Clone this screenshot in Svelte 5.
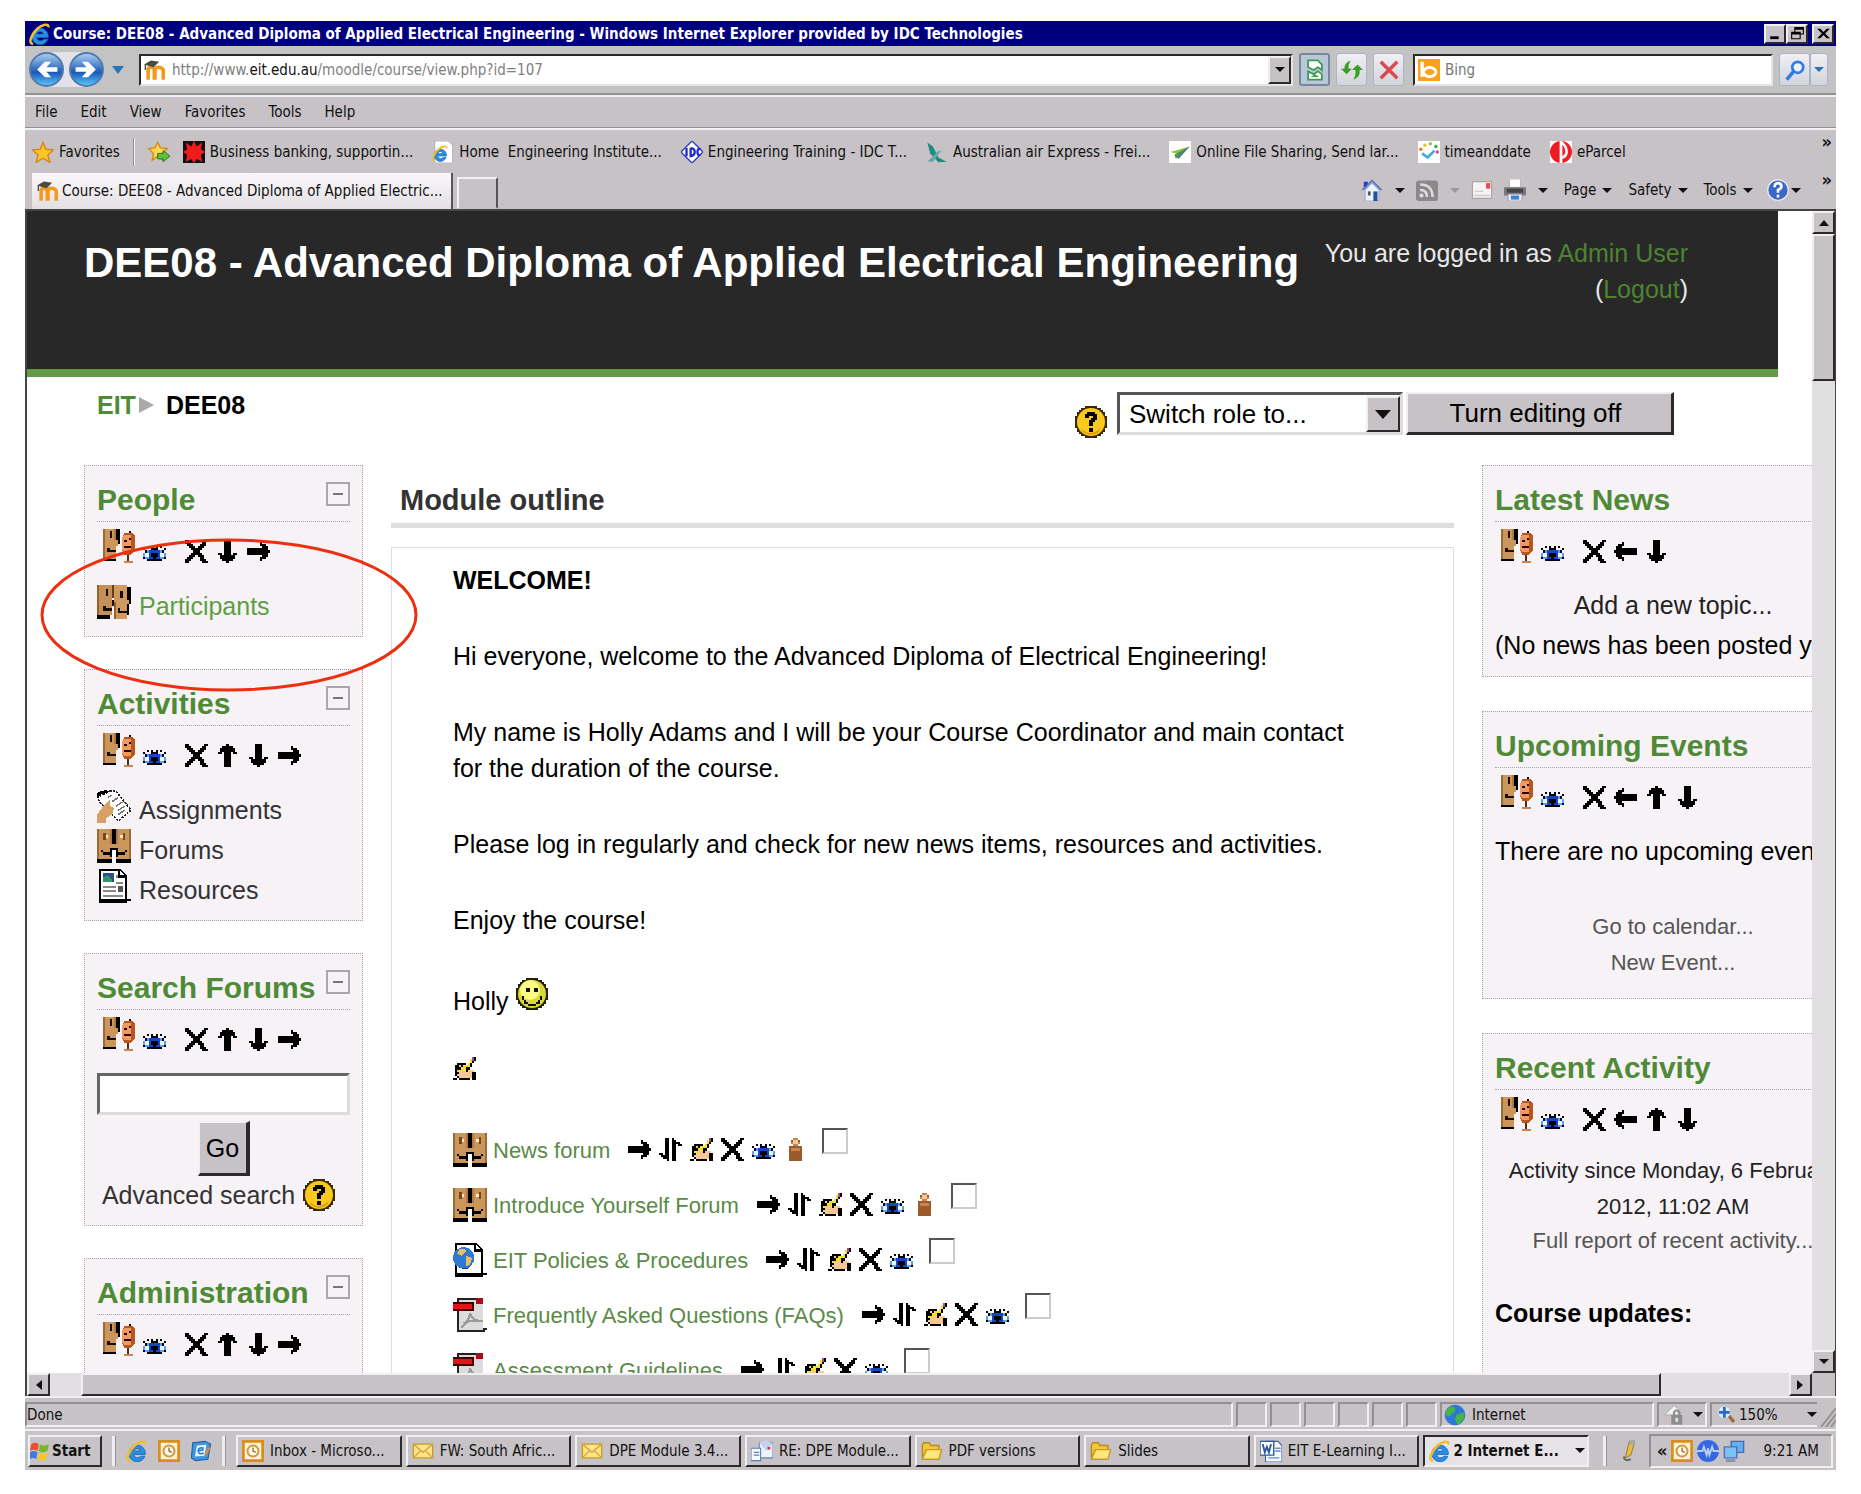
<script>
    // Small command icons, one character per pixel
    const palette = {
        "#": "#000",
        B: "#1546c8",
        L: "#59a0ee",
        w: "#eef6ff",
        f: "#f6c896",
        Y: "#f2e02c",
        P: "#a04c9c",
        o: "#c98550",
        b: "#9a5a2a",
    };

    const arrow = [
        "...........",
        "......#....",
        "......###..",
        ".......###.",
        "##########.",
        "###########",
        "##########.",
        ".......###.",
        "......###..",
        "......#....",
        "...........",
    ];

    const pixels = {
        right: arrow,
        left: arrow.map((row) => [...row].reverse().join("")),
        down: arrow.map((_, y) => arrow.map((row) => row[y]).join("")),
        up: arrow.map((_, y) => arrow.map((row) => row[10 - y]).join("")),
        remove: [
            "##.......##",
            "###.....##.",
            ".###...###.",
            "..###.###..",
            "...#####...",
            "....###....",
            "...#####...",
            "..###.###..",
            ".###...##..",
            "###....###.",
            "##......###",
        ],
        eye: [
            "...........",
            "...........",
            "...........",
            "..#.#.#.#..",
            "#...###...#",
            ".#LBBBBBL#.",
            "LwwB###BwwL",
            "LwwB###BwwL",
            "#LLBB#BBLL#",
            "..#######..",
            "...........",
        ],
        edit: [
            ".........P#",
            "........YP#",
            "........Y#.",
            "..####.Y#..",
            ".##f#YYY#..",
            ".###YY##...",
            ".#YYff#fff.",
            ".##ffffff##",
            ".#fffffff##",
            "..#ffffff##",
            "##.#####.##",
        ],
        move: [
            "...##.#....",
            "...##.##...",
            "...##.####.",
            "...##.##.##",
            "...##.##...",
            "...##.##...",
            "...##.##...",
            "##.##.##...",
            ".####.##...",
            "..###.##...",
            "....#.##...",
        ],
        group: [
            ".....oo....",
            "....bffb...",
            "....offo...",
            ".....oo....",
            "...bbbbbb..",
            "...boooob..",
            "...bbbbbb..",
            "...bbbbbb..",
            "...bbbbbb..",
            "...bbbbbb..",
            "...bbbbbb..",
        ],
    };

    const eGlyph = (x, y, s) =>
        `<g transform="translate(${x} ${y}) scale(${s})"><path d="M14 10.500H5.500a3 3 0 0 0 5.300 1.300h2.900a6 6 0 1 1 .3-1.300zM5.500 8h5a2.600 2.600 0 0 0-5 0z" fill="#2a8fe4" stroke="#1263b4" stroke-width=".6"/><path d="M3 15C-.6 15.500 1 9 6 4.200 9.500 1 14.500 0 14.200 3.200" fill="none" stroke="#f4bd2c" stroke-width="1.800"/></g>`;
    const envelope = `<path d="M1 3h14v10H1z" fill="#ffe489" stroke="#c99a24"/><path d="M1 3l7 6 7-6M1 13l5-5m9 5-5-5" fill="none" stroke="#d4a83a"/>`;
    const clock = `<path d="M1 1h14v14H1z" fill="#fff3d4" stroke="#d98d1c" stroke-width="2"/><circle cx="8" cy="8" r="4" fill="#fffaf0" stroke="#cc9a48" stroke-width="1.500"/><path d="M8 5.500V8l2 1" fill="none" stroke="#a06a20"/>`;
    const folder = `<path d="M1 13V4l1-2h4l1 2h6v3H4z" fill="#f3c83c" stroke="#b98a16"/><path d="M1 14l3-7h11l-2 7z" fill="#ffe780" stroke="#c99a20"/>`;
    const moodle = `<path d="M3 15V8q0-2 2-2t2.500 2v7M8 15V8q0-2 2.500-2T14 8v7" fill="none" stroke="#f39a1c" stroke-width="2.600"/><path d="M0 4l5-3 6 1-4 4z" fill="#4b4b40"/><path d="M1 4v4" stroke="#4b4b40"/>`;
    const helpBadge = `<path d="M5 0h6v1h2v1h1v1h1v2h1v6h-1v2h-1v1h-1v1h-2v1H5v-1H3v-1H2v-1H1v-2H0V5h1V3h1V2h1V1h2z" fill="#3a2a00"/><circle cx="8" cy="8" r="7" fill="#fbc91c"/><path d="M3 11q4 5 10 0l-1 2q-4 3-8 0z" fill="#e09c10"/><path d="M5 4h1V3h4v1h1v3h-1v1H9v2H7V7h1V6h1V5H7v1H5zM7 11h2v2H7z" fill="#000"/>`;
    const halfFace = `<path d="M0 0h7v7h1v2H7v5H0z" fill="#cb965c"/><path d="M0 0h1v14H0z" fill="#9b6a36"/><path d="M6 0h1v7H6z" fill="#b07a44"/><path d="M3 2h1v3H3z" fill="#7a4518"/><path d="M4 3h1v1H4z" fill="#ffe8c8"/><path d="M2 10h1v1h3V9h1v4H6v-1H3v-1H2z" fill="#000"/>`;
    const page = `<path d="M1 0h10l3 3v11h2v1h-2v1H1z" fill="#000"/><path d="M2 1h8v3h3v10H2z" fill="#fff"/><path d="M11 1l2 2h-2z" fill="#fff"/>`;

    const drawings = {
        ie: eGlyph(0, 0, 1),
        moodle,
        clock,
        envelope,
        folder,
        help: helpBadge,
        roles: `<path d="M7 0h2v7H7zM1 14h6v1H1z" fill="#000"/><path d="M1 0h6v5h1v3H7v6H1z" fill="#cb965c"/><path d="M1 0h1v14H1z" fill="#9b6a36"/><path d="M6 0h1v5H6z" fill="#b07a44"/><path d="M4 1h1v3H4zM3 9h1v1h3v1H3z" fill="#1a0d00"/><path d="M11 2h4l1 1v7l-2 2h-3l-1-2V4z" fill="#b8561c"/><path d="M11 3h3v8h-3l-1-1V4z" fill="#f09a62"/><path d="M13 1h1v1h-1zM11 5h1v1h-1zM13 4h1v1h-1zM11 8h3v1h-3z" fill="#200"/><path d="M12 12h1v3h-1z" fill="#432"/><path d="M11 15h4v1h-4z" fill="#c98550"/>`,
        people: `<path d="M14 1h2v8h-1v5h-1zM0 14h6v2H0z" fill="#000"/><path d="M0 0h7v14H0z" fill="#c39058"/><path d="M8 0h6v7h1v2h-1v7H8z" fill="#cf9a60"/><path d="M0 0h1v14H0zM8 8h1v8H8z" fill="#94622e"/><path d="M7 0h1v6H7z" fill="#6b4018"/><path d="M4 2h1v3H4zM11 3h1v3h-1zM3 10h1v1h3v1H3zM10 11h1v1h3v1h-4zM7 7h1v3H7z" fill="#1a0d00"/>`,
        forum: `<path d="M7 0h2v16H7zM0 14h6v2H0zM10 14h6v2h-6z" fill="#000"/>${halfFace}<g transform="translate(16 0) scale(-1 1)">${halfFace}</g><path d="M7 10h2v6H7z" fill="#fff"/><path d="M7 9h2v1H7zM6 14h1v2H6zM9 14h1v2H9z" fill="#000"/>`,
        assignment: `<path d="M6 1h3l7 9-6 5-8-8-2-3z" fill="#fff" stroke="#222" stroke-width=".8" stroke-dasharray="1 .6"/><path d="M5 4l2-1M7 6l3-2M9 8l3-2M10 10l3-2M10 12l3-2" stroke="#777" stroke-width=".7"/><path d="M0 16v-4l3-4 3-3v3l2 1-1 3-3 2v2z" fill="#d9a066"/><path d="M0 4l1-2 4-1" fill="none" stroke="#000" stroke-width="1.500"/>`,
        resource: `${page}<path d="M3 2h5v4H3z" fill="#28518c"/><path d="M3 4l2-1 2 2v1H3z" fill="#35946a"/><path d="M9 3h1v1H9zM9 6h3v1H9zM3 8h6v1H3zM3 10h6v1H3zM3 12h9v1H3z" fill="#888"/><path d="M10 8h2v3h-2z" fill="#555"/>`,
        web: `${page}<circle cx="5" cy="7" r="5" fill="#2f7ad0"/><path d="M3 3q3-1 3 1l-2 2-2-1zM6 6l3 1-1 3-2 1z" fill="#e3bd6a"/><path d="M1 10q4 4 8 0l-2 2q-3 1-6-2z" fill="#123e7c"/>`,
        pdf: `<path d="M2 0h12v14h2v1h-1v1H2z" fill="#222"/><path d="M3 1h11v14H3z" fill="#dcdcdc"/><path d="M11 0h3v3h-3z" fill="#a80c14"/><path d="M0 2h10v4H0z" fill="#400"/><path d="M0 3h9v2H0z" fill="#e3131c"/><path d="M4 14q4-4 4-7 1 4 6 4M5 12q4-2 8-1" fill="none" stroke="#999"/>`,
        smile: `<path d="M5 0h6v1h2v1h1v1h1v2h1v6h-1v2h-1v1h-1v1h-2v1H5v-1H3v-1H2v-1H1v-2H0V5h1V3h1V2h1V1h2z" fill="#222200"/><circle cx="8" cy="8" r="7" fill="#d8d83c"/><circle cx="7" cy="6" r="5" fill="#fafa86"/><path d="M5 5h2v2H5zM9 5h2v2H9zM3 9h1v2h1v1h1v1h4v-1h1v-1h1V9h1v2h-1v2h-2v1H6v-1H4v-2H3z" fill="#111"/>`,
        star: `<path d="M8 1l2 5 5.500.5-4 3.700L13 15.500l-5-3-5 3 1.500-5.300-4-3.700L6 6z" fill="#ffc42e" stroke="#d8860e"/>`,
        starAdd: `<path d="M7 1l2 4 5 .5-4 3.700L11 14l-4-3-4 3 1-4.800L.5 5.500 5 5z" fill="#ffd75a" stroke="#d8860e"/><path d="M7 9h4V7l5 4-5 4v-2H7z" fill="#5cc03a" stroke="#2c7a18" stroke-width=".7"/>`,
        bank: `<path d="M0 0h16v16H0z" fill="#111"/><path d="M8 0l2 4 4-3-1 5 3 2-3 2 1 5-4-2-2 3-2-3-4 2 1-5-3-2 3-2-1-5 4 3z" fill="#f01c1c"/>`,
        iePage: `<path d="M2 0h10l3 3v13H2z" fill="#fff" stroke="#a8b0bc" stroke-width=".7"/>${eGlyph(0, 3, 0.75)}`,
        idc: `<path d="M8 0l8 8-8 8-8-8z" fill="#fff" stroke="#3038b8"/><path d="M4 5v6M7 5v6q3-.5 3-3T7 5M14 6q-2-1-2 2t2 2" fill="none" stroke="#2028d8" stroke-width="1.700"/>`,
        air: `<path d="M1 1l4 3 4 8 6 3-6 .5L3 9z" fill="#1c8c80"/><path d="M1 15l8-8 2 0-6 8z" fill="#69a6a8"/>`,
        plane: `<path d="M0 0h16v16H0z" fill="#fff"/><path d="M1 8l14-4-6 6z" fill="#8cc43c"/><path d="M4 10l11-6-8 9z" fill="#4a7aa0"/><path d="M4 10l11-6-7 5-3 4z" fill="#5a9a30"/>`,
        timeanddate: `<path d="M0 0h16v16H0z" fill="#fff"/><circle cx="5" cy="3" r="1.200" fill="#f2c21c"/><circle cx="9" cy="2" r="1.200" fill="#8cc43c"/><circle cx="13" cy="4" r="1.300" fill="#3ab04c"/><circle cx="2" cy="6" r="1.300" fill="#f07a1c"/><circle cx="14" cy="8" r="1.200" fill="#e03a9c"/><path d="M3 9l4 3 5-5" fill="none" stroke="#48a8e0" stroke-width="2"/>`,
        parcel: `<path d="M0 0h16v16H0z" fill="#fff"/><circle cx="8" cy="8" r="8" fill="#ee1c25"/><path d="M7 0h1.500q4.500 3 4.500 8 0 4-4 5v3H7z" fill="#fff"/><path d="M9 2.500q2.500 3 2 6.500l-2 2z" fill="#ee1c25"/>`,
        bing: `<path d="M0 0h16v16H0z" fill="#f9a11b"/><path d="M3 2v11" stroke="#fff" stroke-width="2.400"/><ellipse cx="8.500" cy="9.500" rx="4.500" ry="3.300" fill="none" stroke="#fff" stroke-width="2.200"/>`,
        compat: `<path d="M3 1h7l3 3v4l-3-2-3 2-4-2zM3 15V9l4 2 3-2 3 2v4z" fill="#fff" stroke="#3c9a54" stroke-width="1.300"/><path d="M5 13l3-2 3 2z" fill="#3c9a54"/>`,
        refresh: `<path d="M0 7h2.500Q2 3 7 1 5 4 5.500 7H8l-4 4zM16 8h-2.500q1 5-4.500 7 2-3 1.500-7H8l4-4z" fill="#34a024"/>`,
        stop: `<path d="M2 2l12 12M14 2L2 14" stroke="#d84a4e" stroke-width="2.500"/>`,
        search: `<circle cx="10" cy="6" r="4" fill="#eaf4ff" stroke="#2f7ce8" stroke-width="2"/><path d="M7 9l-5 6" stroke="#2f7ce8" stroke-width="2.600"/>`,
        home: `<path d="M2 2h3v4H2z" fill="#2c3cc0"/><path d="M1 8l7-7 7 7" fill="#8ea4dc" stroke="#5a6cb8"/><path d="M3 8l5-5 5 5v8H3z" fill="#eef2fa" stroke="#98a8c8" stroke-width=".7"/><path d="M5 9h2v3H5z" fill="#555"/><path d="M9 9h3v7H9z" fill="#24529c"/>`,
        rss: `<rect x="0" y="1" width="16" height="15" rx="2" fill="#8b888c"/><path d="M3 4q9 0 9 9M3 8q5 0 5 5" fill="none" stroke="#ddd" stroke-width="1.800"/><circle cx="4" cy="12" r="1.500" fill="#ddd"/>`,
        mail: `<path d="M1 2h14v12H1z" fill="#f7f3f5" stroke="#999" stroke-width=".7"/><path d="M11 3h3v4h-3z" fill="#e04a50"/><path d="M3 9h6M2 12h12" stroke="#ccc"/>`,
        print: `<path d="M4 0h8v6H4z" fill="#fff" stroke="#aaa" stroke-width=".5"/><path d="M0 6h16v6H0z" fill="#7a7a7e"/><path d="M2 7h12v3H2z" fill="#444"/><path d="M3 11h10v5H3z" fill="#eef" stroke="#889" stroke-width=".5"/><path d="M5 12h6v3H5z" fill="#3c88d0"/>`,
        helpBlue: `<circle cx="8" cy="8" r="7.500" fill="#3b68c4" stroke="#e2e8f4"/><path d="M5.500 6q0-3 2.500-3t2.500 2.500Q10.500 7 8 8v2M8 11.500v2" fill="none" stroke="#fff" stroke-width="1.900"/>`,
        flag: `<path d="M1 3q3-2 6 0L6 8Q3 6 0 8z" fill="#e8502c"/><path d="M8 3q3 2 7 0l-1 5q-4 2-7 0z" fill="#74b82c"/><path d="M0 9q3-2 6 0l-1 5q-3-2-5 0z" fill="#3f7be0"/><path d="M7 9q3 2 7 0l-1 5q-4 2-7 0z" fill="#f6c42c"/>`,
        desktop: `<path d="M2 2l9-1 4 2-2 11-9 1-3-2z" fill="#3f95dc" stroke="#1e62a8" stroke-width=".8"/><path d="M5 4l7-.5-1.500 8-7 .5z" fill="#e8f4ff"/><path d="M10 6Q6 5 6 8t4 1.500M6 8l4-1" fill="none" stroke="#2a7cc8" stroke-width="1.200"/><path d="M13 5l2 1-3 5-2 1z" fill="#d88a4c"/>`,
        reply: `<path d="M6 2h10v11H6z" fill="#eef3fb" stroke="#6b83b4" stroke-width=".8"/><path d="M6 2l5-2 5 3-5 5z" fill="#c4d4ee"/><path d="M12 5h2v2h-2z" fill="#d8343c"/><path d="M0 6h7v9H0z" fill="#f4f8ff" stroke="#5d7fb8" stroke-width=".8"/><path d="M2 9h4M2 11h4" stroke="#5d7fb8"/>`,
        word: `<path d="M4 1h9l3 3v12H4z" fill="#f4f8ff" stroke="#3c62a8" stroke-width=".8"/><path d="M0 1h10v10H0z" fill="#fff" stroke="#2b55a8"/><path d="M2 3l1.500 6L5 5l1.500 4L8 3" fill="none" stroke="#2b55a8" stroke-width="1.400"/><path d="M11 6h4M11 8h4M6 13h8" stroke="#6c8cc4"/>`,
        globe: `<circle cx="8" cy="8" r="7.500" fill="#2c78d8"/><path d="M4 2q5-1 4 3L4 9 1 8q0-4 3-6zM9 8l5-2q2 3-1 7l-3 2-2-4z" fill="#44b444"/>`,
        lock: `<path d="M1 8l7-7 3 2v5z" fill="#f2f2f2" stroke="#bbb"/><path d="M6 8h8v7H6z" fill="#8c8c8c"/><path d="M8 8V6q2-3 4 0v2" fill="none" stroke="#8c8c8c" stroke-width="1.500"/><path d="M9 10h2v3H9z" fill="#ddd"/>`,
        zoom: `<path d="M10 9l5 6" stroke="#9a6a3c" stroke-width="3"/><circle cx="6" cy="6" r="5.500" fill="#dcecff"/><path d="M6 1v10M1 6h10" stroke="#2468d8" stroke-width="2.600"/>`,
        pen: `<path d="M9 1h4l-3 10-4 2z" fill="#e8bc3c" stroke="#8a6a2c" stroke-width=".6"/><path d="M10 0h3v4l-4-1z" fill="#aaa"/><path d="M5 12q0 4 5 2" fill="none" stroke="#666" stroke-width="1.400"/>`,
        wave: `<circle cx="8" cy="8" r="8" fill="#3767e0"/><path d="M0 8h4l1-3 2 6 1-5 1 5 2-6 1 3h4" fill="none" stroke="#b8d0ff" stroke-width="1.300"/>`,
        network: `<path d="M6 1h9v8H6z" fill="#62b2f0" stroke="#4a68b0"/><path d="M1 5h9v8H1z" fill="#7ac4f4" stroke="#5a6ab8"/><path d="M2 15h7" stroke="#8890b0" stroke-width="2"/>`,
        minimise: `<path d="M3 11h8v3H3z"/>`,
        restore: `<path d="M5 1h9v8h-3V8h2V4H6v2H5zM2 6h9v8H2zM3 9v4h7V9z" fill-rule="evenodd"/>`,
        close: `<path d="M2 3h3l3 3.500L11 3h3L9.500 8l4.500 5h-3L8 9.500 5 13H2l4.500-5z"/>`,
    };

    const menus = ["File", "Edit", "View", "Favorites", "Tools", "Help"];

    const favorites = [
        { icon: "bank", text: "Business banking, supportin..." },
        { icon: "iePage", text: "Home  Engineering Institute..." },
        { icon: "idc", text: "Engineering Training - IDC T..." },
        { icon: "air", text: "Australian air Express - Frei..." },
        { icon: "plane", text: "Online File Sharing, Send lar..." },
        { icon: "timeanddate", text: "timeanddate" },
        { icon: "parcel", text: "eParcel" },
    ];

    const activities = [
        { icon: "assignment", text: "Assignments" },
        { icon: "forum", text: "Forums" },
        { icon: "resource", text: "Resources" },
    ];

    const modules = [
        { icon: "forum", text: "News forum", group: true },
        { icon: "forum", text: "Introduce Yourself Forum", group: true },
        { icon: "web", text: "EIT Policies & Procedures" },
        { icon: "pdf", text: "Frequently Asked Questions (FAQs)" },
        { icon: "pdf", text: "Assessment Guidelines" },
    ];

    const tasks = [
        { icon: "clock", text: "Inbox - Microso..." },
        { icon: "envelope", text: "FW: South Afric..." },
        { icon: "envelope", text: "DPE Module 3.4..." },
        { icon: "reply", text: "RE: DPE Module..." },
        { icon: "folder", text: "PDF versions" },
        { icon: "folder", text: "Slides" },
        { icon: "word", text: "EIT E-Learning I..." },
    ];
</script>

{#snippet pixel(name)}
    <svg class="pixel" viewBox="0 0 11 11" preserveAspectRatio="none" aria-hidden="true">
        {#each pixels[name] as row, y}
            {#each [...row] as dot, x}
                {#if dot !== "."}
                    <rect {x} {y} width="1" height="1" fill={palette[dot]} />
                {/if}
            {/each}
        {/each}
    </svg>
{/snippet}

{#snippet icon(name, size = "small")}
    <svg class="icon {size}" viewBox="0 0 16 16" preserveAspectRatio="none" aria-hidden="true">
        {@html drawings[name]}
    </svg>
{/snippet}

{#snippet command(name)}
    <a class="command" href="#{name}" aria-label={name}>{@render pixel(name)}</a>
{/snippet}

{#snippet blockHead(title, arrows, collapsible)}
    <div class="block-head">
        <h2>{title}</h2>
        {#if collapsible}
            <button class="collapse" aria-label="Hide {title}"></button>
        {/if}
    </div>
    <div class="commands">
        <a class="command" href="#roles" aria-label="Assign roles">{@render icon("roles", "large")}</a>
        {@render command("eye")}
        <span class="spacer"></span>
        {#each ["remove", ...arrows] as name}
            {@render command(name)}
        {/each}
    </div>
{/snippet}

<div class="window">
    <header class="title-bar">
        {@render icon("ie")}
        <span class="title">Course: DEE08 - Advanced Diploma of Applied Electrical Engineering - Windows Internet Explorer provided by IDC Technologies</span>
        <button class="bevel" aria-label="Minimise">{@render icon("minimise", "tiny")}</button>
        <button class="bevel" aria-label="Restore">{@render icon("restore", "tiny")}</button>
        <button class="bevel close" aria-label="Close">{@render icon("close", "tiny")}</button>
    </header>

    <div class="address-bar">
        <div class="travel">
            <button aria-label="Back">
                <svg viewBox="0 0 20 20"><path d="M17 8.500v3h-7l3 3.500H9l-5-5 5-5h4l-3 3.500z" /></svg>
            </button>
            <button aria-label="Forward">
                <svg viewBox="0 0 20 20"><path d="M3 8.500v3h7L7 15h4l5-5-5-5H7l3 3.500z" /></svg>
            </button>
        </div>
        <button class="flat" aria-label="Recent pages"><i class="tri blue wide"></i></button>
        <div class="field address">
            {@render icon("moodle")}
            <div class="url" role="textbox" tabindex="0" aria-label="Address" contenteditable="true">http://www.<b>eit.edu.au</b>/moodle/course/view.php?id=107</div>
            <button class="bevel drop" aria-label="Show addresses"><i class="tri"></i></button>
        </div>
        <button class="tool pressed" aria-label="Compatibility view">{@render icon("compat")}</button>
        <button class="tool" aria-label="Refresh">{@render icon("refresh")}</button>
        <button class="tool" aria-label="Stop">{@render icon("stop")}</button>
        <div class="field search">
            {@render icon("bing")}
            <input type="text" placeholder="Bing" aria-label="Search" />
        </div>
        <div class="search-buttons">
            <button class="tool" aria-label="Go">{@render icon("search")}</button>
            <button class="tool narrow" aria-label="Search options"><i class="tri blue"></i></button>
        </div>
    </div>

    <nav class="menu-bar">
        {#each menus as menu}
            <button class="flat">{menu}</button>
        {/each}
    </nav>

    <nav class="favorites">
        <button class="flat fav">{@render icon("star")}Favorites</button>
        <span class="rule"></span>
        <button class="flat" aria-label="Add to favorites">{@render icon("starAdd")}</button>
        {#each favorites as { icon: name, text }}
            <a href="#{name}">{@render icon(name)}{text}</a>
        {/each}
        <span class="more">»</span>
    </nav>

    <div class="tab-row">
        <button class="tab">{@render icon("moodle")}Course: DEE08 - Advanced Diploma of Applied Electric...</button>
        <button class="new-tab" aria-label="New tab"></button>
        <div class="command-bar">
            <button class="flat" aria-label="Home">{@render icon("home")}<i class="tri"></i></button>
            <button class="flat" aria-label="Feeds">{@render icon("rss")}<i class="tri pale"></i></button>
            <button class="flat" aria-label="Read mail">{@render icon("mail")}</button>
            <button class="flat" aria-label="Print">{@render icon("print")}<i class="tri"></i></button>
            <button class="flat text">Page<i class="tri"></i></button>
            <button class="flat text">Safety<i class="tri"></i></button>
            <button class="flat text">Tools<i class="tri"></i></button>
            <button class="flat tight" aria-label="Help">{@render icon("helpBlue")}<i class="tri"></i></button>
            <span class="more">»</span>
        </div>
    </div>

    <div class="browser">
        <div class="viewport">
            <header class="page-header">
                <h1>DEE08 - Advanced Diploma of Applied Electrical Engineering</h1>
                <p>You are logged in as <a href="#user">Admin User</a><br />(<a href="#logout">Logout</a>)</p>
            </header>

            <div class="nav-bar">
                <div class="breadcrumb">
                    <a href="#eit">EIT</a><i></i><span>DEE08</span>
                </div>
                <form class="editing">
                    {@render icon("help", "medium")}
                    <div class="select">
                        <select aria-label="Switch role to">
                            <option>Switch role to...</option>
                        </select>
                        <span class="bevel arrow"><i class="tri big"></i></span>
                    </div>
                    <button type="button" class="bevel edit">Turn editing off</button>
                </form>
            </div>

            <div class="columns">
                <aside>
                    <section class="block">
                        {@render blockHead("People", ["down", "right"], true)}
                        <ul>
                            <li><a class="green" href="#participants">{@render icon("people", "large")}Participants</a></li>
                        </ul>
                        <svg class="highlight" viewBox="0 0 378 154" aria-hidden="true">
                            <ellipse cx="189" cy="77" rx="187" ry="75" />
                        </svg>
                    </section>

                    <section class="block">
                        {@render blockHead("Activities", ["up", "down", "right"], true)}
                        <ul>
                            {#each activities as { icon: name, text }}
                                <li><a href="#{text}">{@render icon(name, "large")}{text}</a></li>
                            {/each}
                        </ul>
                    </section>

                    <section class="block">
                        {@render blockHead("Search Forums", ["up", "down", "right"], true)}
                        <form class="search-forums">
                            <input type="text" aria-label="Search forums" />
                            <button type="button" class="bevel">Go</button>
                            <div class="advanced"><a href="#advanced">Advanced search</a>{@render icon("help", "medium")}</div>
                        </form>
                    </section>

                    <section class="block last">
                        {@render blockHead("Administration", ["up", "down", "right"], true)}
                    </section>
                </aside>

                <main>
                    <h2>Module outline</h2>
                    <div class="outline">
                        <p><strong>WELCOME!</strong></p>
                        <p>Hi everyone, welcome to the Advanced Diploma of Electrical Engineering!</p>
                        <p>My name is Holly Adams and I will be your Course Coordinator and main contact<br />for the duration of the course.</p>
                        <p>Please log in regularly and check for new news items, resources and activities.</p>
                        <p>Enjoy the course!</p>
                        <p>Holly {@render icon("smile", "medium")}</p>
                        <div class="edit-summary">{@render command("edit")}</div>
                        <ul>
                            {#each modules as { icon: name, text, group }}
                                <li>
                                    {@render icon(name, "large")}
                                    <a href="#{name}">{text}</a>
                                    <div class="module-commands">
                                        {@render command("right")}
                                        {@render command("move")}
                                        {@render command("edit")}
                                        {@render command("remove")}
                                        {@render command("eye")}
                                        {#if group}
                                            {@render command("group")}
                                        {/if}
                                    </div>
                                    <input type="checkbox" aria-label={text} />
                                </li>
                            {/each}
                        </ul>
                    </div>
                </main>

                <aside class="right">
                    <section class="block news">
                        {@render blockHead("Latest News", ["left", "down"], false)}
                        <p class="center"><a href="#topic">Add a new topic...</a></p>
                        <p>(No news has been posted yet)</p>
                    </section>

                    <section class="block">
                        {@render blockHead("Upcoming Events", ["left", "up", "down"], false)}
                        <p class="wide">There are no upcoming events</p>
                        <p class="center small-text">
                            <a href="#calendar">Go to calendar...</a><br />
                            <a href="#event">New Event...</a>
                        </p>
                    </section>

                    <section class="block last">
                        {@render blockHead("Recent Activity", ["left", "up", "down"], false)}
                        <p class="center small-text">Activity since Monday, 6 February<br />2012, 11:02 AM</p>
                        <p class="center small-text report"><a href="#report">Full report of recent activity...</a></p>
                        <p class="updates"><strong>Course updates:</strong></p>
                    </section>
                </aside>
            </div>
        </div>

        <div class="scroll vertical">
            <button class="bevel" aria-label="Scroll up"><i class="tri up"></i></button>
            <div class="bevel thumb"></div>
            <span class="track"></span>
            <button class="bevel" aria-label="Scroll down"><i class="tri"></i></button>
        </div>

        <div class="scroll horizontal">
            <button class="bevel" aria-label="Scroll left"><i class="tri left"></i></button>
            <span class="gap"></span>
            <div class="bevel thumb"></div>
            <span class="track"></span>
            <button class="bevel" aria-label="Scroll right"><i class="tri right"></i></button>
        </div>
        <div class="corner"></div>
    </div>

    <footer class="status-bar">
        <span class="pane grow">Done</span>
        {#each Array(6) as _}
            <span class="pane"></span>
        {/each}
        <span class="pane zone">{@render icon("globe")}Internet</span>
        <span class="pane lock">{@render icon("lock")}<i class="tri"></i></span>
        <span class="pane zoom">{@render icon("zoom", "tiny")}150%<i class="tri"></i></span>
        <svg class="resize" viewBox="0 0 16 20" aria-hidden="true">
            <path d="M1 20L16 1M6 20L16 7M11 20l5-7" />
        </svg>
    </footer>

    <footer class="task-bar">
        <button class="bevel start">{@render icon("flag")}Start</button>
        <span class="grip"></span>
        <div class="quick">
            {@render icon("ie")}
            {@render icon("clock")}
            {@render icon("desktop")}
        </div>
        <span class="grip"></span>
        <div class="tasks">
            {#each tasks as { icon: name, text }}
                <button class="bevel task">{@render icon(name)}{text}</button>
            {/each}
            <button class="task active">{@render icon("ie")}<span>2 Internet E...</span><i class="tri"></i></button>
        </div>
        <span class="grip"></span>
        {@render icon("pen")}
        <div class="tray">
            <b>«</b>
            {@render icon("clock")}
            {@render icon("wave")}
            {@render icon("network")}
            <span>9:21 AM</span>
        </div>
    </footer>
</div>

<style>
    :global(body) {
        margin: 0;
        background: #fff;
    }

    .window {
        --face: #c6c2c6;
        --light: #f1eff1;
        --shade: #939093;
        --dark: #2b292b;
        --green: #4f8a36;

        display: flex;
        flex-direction: column;
        box-sizing: border-box;
        height: 100vh;
        padding: 21px 25px 24px;
        font-family: "DejaVu Sans Condensed", "DejaVu Sans", sans-serif;
        font-stretch: condensed;
        font-size: 15px;
        line-height: 20px;
        color: #111;
    }

    .window *,
    .window *::before {
        box-sizing: border-box;
    }

    button,
    input,
    select {
        margin: 0;
        padding: 0;
        border: 0;
        border-radius: 0;
        font: inherit;
        color: inherit;
    }

    a {
        color: inherit;
        text-decoration: none;
    }

    h1,
    h2,
    p,
    ul {
        margin: 0;
        padding: 0;
        list-style: none;
    }

    svg {
        flex: none;
    }

    .icon.tiny {
        width: 17px;
        height: 17px;
    }

    .icon.small {
        width: 22px;
        height: 22px;
    }

    .icon.medium {
        width: 32px;
        height: 32px;
    }

    .icon.large {
        width: 34px;
        height: 34px;
        shape-rendering: crispEdges;
    }

    .pixel {
        display: block;
        width: 23px;
        height: 23px;
        shape-rendering: crispEdges;
    }

    .bevel {
        background: var(--face);
        border: 2px solid;
        border-color: var(--light) var(--dark) var(--dark) var(--light);
    }

    .flat {
        display: flex;
        align-items: center;
        background: none;
    }

    .tri {
        flex: none;
        border: solid transparent;
        border-width: 5px 5px 0;
        border-top-color: #111;
    }

    .tri.blue {
        border-top-color: #2277bb;
    }

    .tri.wide {
        border-width: 8px 6px 0;
    }

    .tri.pale {
        border-top-color: #999;
    }

    .tri.big {
        border-width: 9px 8px 0;
    }

    .tri.up {
        border-width: 0 5px 6px;
        border-color: transparent transparent #111;
    }

    .tri.left {
        border-width: 5px 6px 5px 0;
        border-color: transparent #111;
    }

    .tri.right {
        border-width: 5px 0 5px 6px;
        border-color: transparent #111;
    }

    .title-bar {
        display: flex;
        align-items: center;
        height: 25px;
        padding: 0 2px 0 4px;
        background: #00007f;
        color: #fff;
        font-size: 15px;
        font-weight: bold;
    }

    .title {
        flex: 1;
        padding-left: 2px;
        white-space: nowrap;
        overflow: hidden;
    }

    .title-bar button {
        display: flex;
        align-items: center;
        justify-content: center;
        width: 22px;
        height: 20px;
    }

    .title-bar .tiny {
        height: 15px;
    }

    .title-bar .close {
        margin-left: 4px;
    }

    .address-bar {
        display: flex;
        align-items: center;
        gap: 6px;
        height: 49px;
        padding: 0 8px 0 4px;
        background: #c3c3c3;
        border-bottom: 2px solid var(--shade);
    }

    .travel {
        display: flex;
        gap: 5px;
        border-radius: 18px;
        background: #e2e2e8;
    }

    .travel button {
        display: flex;
        width: 35px;
        height: 35px;
        border: 2px solid #5279a8;
        border-radius: 50%;
        background: linear-gradient(#a9cdf0, #2f6cc0 50%, #1d5ab8 60%, #58c2f6);
    }

    .travel svg {
        width: 100%;
        fill: #fff;
    }

    .address-bar .flat {
        padding: 0 9px 0 2px;
    }

    .field {
        display: flex;
        align-items: center;
        height: 32px;
        padding-left: 3px;
        background: #fff;
        border: 2px solid;
        border-color: var(--dark) #e4e4e4 #e4e4e4 var(--dark);
    }

    .field.address {
        flex: 1;
    }

    .url {
        flex: 1;
        padding-left: 6px;
        color: #808080;
        outline: none;
    }

    .url b {
        font-weight: normal;
        color: #111;
    }

    .drop {
        display: flex;
        align-items: center;
        justify-content: center;
        width: 23px;
        height: 28px;
    }

    .field.search {
        width: 360px;
        margin-left: 3px;
    }

    .field input {
        flex: 1;
        min-width: 0;
        padding-left: 5px;
        background: none;
        outline: none;
    }

    .field input::placeholder {
        color: #777;
        opacity: 1;
    }

    .tool {
        display: flex;
        align-items: center;
        justify-content: center;
        width: 31px;
        height: 33px;
        border: 1px solid #aab4c4;
        border-radius: 3px;
        background: linear-gradient(#f0eff4, #d4d4dc);
    }

    .tool.pressed {
        border: 2px solid #7488a0;
        background: #b8c8d8;
    }

    .tool.narrow {
        width: 18px;
    }

    .search-buttons {
        display: flex;
    }

    .menu-bar {
        display: flex;
        align-items: center;
        gap: 23px;
        height: 33px;
        padding-left: 10px;
        background: var(--face);
        border-top: 2px solid var(--light);
        border-bottom: 1px solid var(--shade);
    }

    .favorites {
        display: flex;
        align-items: center;
        gap: 13px;
        height: 43px;
        padding: 2px 0 0 7px;
        background: var(--face);
        border-top: 2px solid var(--light);
    }

    .favorites a {
        display: flex;
        align-items: center;
        gap: 5px;
        white-space: pre;
    }

    .favorites a + a {
        margin-left: 6px;
    }

    .favorites .fav {
        gap: 5px;
    }

    .rule {
        width: 2px;
        height: 28px;
        background: var(--shade);
        border-right: 1px solid var(--light);
    }

    .more {
        font-size: 18px;
        font-weight: bold;
        margin-left: auto;
        padding: 0 4px 20px 0;
    }

    .tab-row {
        display: flex;
        align-items: flex-end;
        height: 38px;
        padding-left: 7px;
        background: var(--face);
    }

    .tab {
        display: flex;
        align-items: center;
        gap: 3px;
        height: 36px;
        padding: 0 8px 0 5px;
        background: linear-gradient(#fbf8fb, #e3e0e3);
        border-right: 2px solid #555;
        white-space: nowrap;
    }

    .new-tab {
        width: 41px;
        height: 32px;
        margin-left: 4px;
        background: var(--face);
        border: 2px solid;
        border-color: var(--light) #555 transparent var(--light);
    }

    .command-bar {
        display: flex;
        align-items: center;
        height: 36px;
        padding-bottom: 2px;
        gap: 11px;
        margin-left: auto;
    }

    .command-bar .flat {
        gap: 12px;
    }

    .command-bar .text {
        gap: 6px;
        margin-left: 5px;
    }

    .command-bar .tight {
        gap: 2px;
        margin: 0 10px 0 3px;
    }

    .browser {
        flex: 1;
        min-height: 0;
        display: grid;
        grid-template: minmax(0, 1fr) 23px / minmax(0, 1fr) 23px;
        border: 2px solid #444;
        border-width: 2px 1px 0 2px;
    }

    .viewport {
        overflow: hidden;
        background: #fff;
        font-family: "Liberation Sans", Arial, sans-serif;
        font-stretch: normal;
        font-size: 25px;
        line-height: 36px;
        color: #000;
    }

    .page-header {
        display: flex;
        justify-content: space-between;
        height: 166px;
        margin-right: 34px;
        padding: 24px 90px 0 57px;
        background: #282828;
        border-bottom: 8px solid #649c46;
        color: #fff;
    }

    h1 {
        font-size: 42px;
        line-height: 56px;
        white-space: nowrap;
    }

    .page-header p {
        color: #e8e8e8;
        text-align: right;
        white-space: nowrap;
    }

    .page-header a {
        color: #4d8332;
    }

    .nav-bar {
        display: flex;
        justify-content: space-between;
        align-items: flex-start;
        height: 88px;
        padding: 10px 138px 0 70px;
    }

    .breadcrumb {
        display: flex;
        align-items: center;
        font-weight: bold;
    }

    .breadcrumb a {
        color: var(--green);
    }

    .breadcrumb i {
        margin: 0 12px 0 3px;
        border: solid transparent;
        border-width: 8px 0 8px 15px;
        border-left-color: #aaa;
    }

    .editing {
        display: flex;
        align-items: flex-end;
        padding-top: 5px;
        font-size: 26px;
    }

    .editing > .icon {
        margin: 0 10px -3px 0;
    }

    .select {
        position: relative;
        margin-right: 3px;
    }

    .select select {
        appearance: none;
        width: 286px;
        height: 43px;
        padding-left: 9px;
        background: #fff;
        border: 3px solid;
        border-color: #555 #ddd #ddd #555;
    }

    .select .arrow {
        position: absolute;
        top: 4px;
        right: 3px;
        bottom: 3px;
        width: 34px;
        display: flex;
        align-items: center;
        justify-content: center;
        pointer-events: none;
    }

    .edit {
        width: 268px;
        height: 43px;
        padding-right: 8px;
        border-width: 2px 3px 3px 2px;
    }

    .columns {
        display: grid;
        grid-template-columns: 279px minmax(0, 1fr) 382px;
        gap: 28px;
        margin: 0 -52px 0 57px;
    }

    aside {
        display: flex;
        flex-direction: column;
        gap: 32px;
    }

    aside.right {
        gap: 34px;
    }

    .block {
        position: relative;
        padding: 0 12px 17px;
        background: #f6f2f6;
        border: 1px dotted #a9a4a9;
        color: #000;
    }

    .block.last {
        padding-bottom: 80px;
    }

    .block-head {
        display: flex;
        justify-content: space-between;
        padding: 16px 0 3px;
        border-bottom: 1px dotted #a9a4a9;
    }

    .block-head h2 {
        font-size: 30px;
        color: var(--green);
    }

    .collapse {
        display: flex;
        align-items: center;
        justify-content: center;
        width: 24px;
        height: 24px;
        background: #f6f2f6;
        border: 2px solid #aaa6aa;
    }

    .collapse::before {
        content: "";
        width: 10px;
        height: 2px;
        background: #777;
    }

    .commands {
        display: flex;
        align-items: flex-end;
        gap: 8px;
        margin: 7px 0 22px 4px;
    }

    .command {
        display: block;
    }

    .command svg {
        display: block;
    }

    .spacer {
        width: 3px;
    }

    aside ul {
        display: flex;
        flex-direction: column;
        gap: 6px;
    }

    aside li a {
        display: flex;
        align-items: flex-end;
        gap: 8px;
        line-height: 26px;
        color: #333;
    }

    aside li .green {
        color: #5f9e42;
    }

    .highlight {
        position: absolute;
        top: 72px;
        left: -45px;
        z-index: 1;
        width: 378px;
        height: 154px;
        pointer-events: none;
    }

    .highlight ellipse {
        fill: none;
        stroke: #ec2f10;
        stroke-width: 3;
    }

    .search-forums {
        display: flex;
        flex-direction: column;
        align-items: center;
        margin-bottom: -5px;
    }

    .search-forums input {
        width: 100%;
        height: 42px;
        margin-bottom: 6px;
        background: #fff;
        border: 3px solid;
        border-color: #666 #ddd #ddd #666;
    }

    .search-forums button {
        width: 52px;
        height: 55px;
        border-width: 2px 4px 3px 2px;
    }

    .advanced {
        display: flex;
        align-items: center;
        gap: 8px;
        margin-top: 1px;
        padding-right: 10px;
        color: #333;
        white-space: nowrap;
    }

    .block p {
        line-height: 40px;
        white-space: nowrap;
    }

    .block .center {
        text-align: center;
        color: #222;
    }

    .block.news {
        padding-bottom: 11px;
    }

    .block .small-text {
        font-size: 22px;
        line-height: 36px;
    }

    .small-text a {
        color: #555;
    }

    .block .wide {
        margin-bottom: 38px;
    }

    .block .report {
        line-height: 32px;
    }

    .block .updates {
        margin-top: 36px;
    }

    main h2 {
        padding: 17px 0 5px 9px;
        border-bottom: 5px solid #dedede;
        font-size: 29px;
        color: #333;
    }

    .outline {
        height: 100%;
        margin-top: 19px;
        padding: 14px 0 0 61px;
        border: 1px solid #dedede;
    }

    .outline p {
        margin-bottom: 40px;
        white-space: nowrap;
    }

    .edit-summary {
        margin: -2px 0 42px;
    }

    .outline li {
        display: flex;
        align-items: center;
        height: 55px;
    }

    .outline li > a {
        margin: 2px 18px 0 6px;
        font-size: 22px;
        color: #5a8a48;
    }

    .module-commands {
        display: flex;
        gap: 8px;
        margin-right: 16px;
    }

    input[type="checkbox"] {
        appearance: none;
        align-self: flex-start;
        width: 26px;
        height: 26px;
        margin-top: 6px;
        background: #fff;
        border: 2px solid;
        border-color: #555 #ccc #ccc #555;
    }

    .scroll {
        display: flex;
        background: #e2dfe2;
    }

    .scroll.vertical {
        flex-direction: column;
    }

    .scroll button {
        display: flex;
        align-items: center;
        justify-content: center;
        width: 23px;
        height: 23px;
    }

    .vertical .thumb {
        flex: 144;
    }

    .vertical .track {
        flex: 973;
    }

    .horizontal .gap {
        flex: 31;
    }

    .horizontal .thumb {
        flex: 1580;
    }

    .horizontal .track {
        flex: 128;
    }

    .corner {
        background: var(--face);
    }

    .status-bar {
        display: flex;
        gap: 3px;
        height: 33px;
        padding: 4px 0 2px;
        background: var(--face);
        border-top: 2px solid var(--light);
    }

    .pane {
        display: flex;
        align-items: center;
        width: 31px;
        border: 2px solid;
        border-color: var(--shade) var(--light) var(--light) var(--shade);
        white-space: nowrap;
    }

    .pane.grow {
        flex: 1;
    }

    .pane.zone {
        gap: 6px;
        width: 214px;
        padding-left: 2px;
    }

    .pane.lock {
        gap: 8px;
        width: 50px;
        padding-left: 4px;
    }

    .pane.zoom {
        width: 107px;
        gap: 4px;
        padding-left: 6px;
        border-right: 0;
    }

    .pane.zoom .tri {
        margin-left: auto;
    }

    .resize {
        align-self: flex-end;
        width: 16px;
        height: 20px;
        fill: none;
        stroke: var(--shade);
        stroke-width: 2;
    }

    .task-bar {
        display: flex;
        align-items: center;
        gap: 10px;
        height: 41px;
        padding: 0 3px;
        background: var(--face);
        border-top: 2px solid var(--light);
    }

    .start {
        display: flex;
        align-items: center;
        gap: 2px;
        width: 74px;
        height: 32px;
        font-weight: bold;
    }

    .start .icon {
        width: 20px;
    }

    .grip {
        width: 4px;
        height: 30px;
        background: #eee;
        border-right: 1px solid var(--shade);
    }

    .quick {
        display: flex;
        gap: 10px;
    }

    .tasks {
        flex: 1;
        min-width: 0;
        display: flex;
        gap: 4px;
        margin-right: 4px;
    }

    .task {
        flex: 1;
        min-width: 0;
        display: flex;
        align-items: center;
        gap: 6px;
        height: 32px;
        padding-left: 4px;
        white-space: nowrap;
        overflow: hidden;
    }

    .task.active {
        background: #e6e3e6;
        border: 2px solid;
        border-color: var(--dark) var(--light) var(--light) var(--dark);
        font-weight: bold;
        gap: 2px;
    }

    .task.active .tri {
        margin: 0 2px 0 auto;
    }

    .tray {
        display: flex;
        align-items: center;
        gap: 4px;
        height: 34px;
        width: 184px;
        padding-left: 6px;
        border: 2px solid;
        border-color: var(--shade) var(--light) var(--light) var(--shade);
    }

    .tray b {
        font-size: 18px;
    }

    .tray span {
        margin-left: auto;
        padding-right: 12px;
    }
</style>
